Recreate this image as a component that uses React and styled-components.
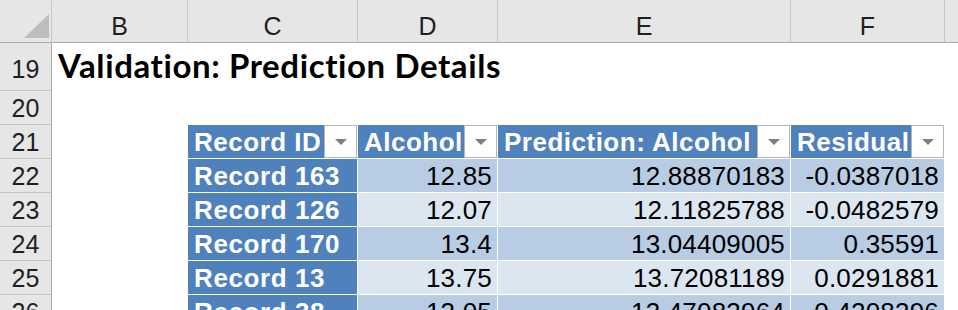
import React from "react";
import styled, { createGlobalStyle, css } from "styled-components";

const GlobalStyle = createGlobalStyle`
  html, body {
    margin: 0;
    padding: 0;
    background: #fff;
    overflow: hidden;
  }
`;

const COLUMNS = ["B", "C", "D", "E", "F", ""];

const HEADERS = ["Record ID", "Alcohol", "Prediction: Alcohol", "Residual"];

const ROWS = [
  ["Record 163", "12.85", "12.88870183", "-0.0387018"],
  ["Record 126", "12.07", "12.11825788", "-0.0482579"],
  ["Record 170", "13.4", "13.04409005", "0.35591"],
  ["Record 13", "13.75", "13.72081189", "0.0291881"],
  ["Record 38", "13.05", "13.47083964", "-0.4208396"],
];

const Sheet = styled.div`
  display: grid;
  grid-template-columns: 52px 136px 170px 140px 293px 154px 1fr;
  grid-template-rows: 43px 48px repeat(7, 34px);
  width: 958px;
  height: 310px;
  overflow: hidden;
  background: #fff;
  font-family: "Liberation Sans", Arial, sans-serif;
`;

const Corner = styled.div`
  position: relative;
  background: #e6e6e6;
  border-bottom: 1px solid #ababab;
  border-right: 1px solid #c8c8c8;

  &::after {
    content: "";
    position: absolute;
    left: 24px;
    top: 14px;
    width: 25px;
    height: 24px;
    background: #bdbdbd;
    clip-path: polygon(100% 0, 100% 100%, 0 100%);
  }
`;

const ColHead = styled.div`
  display: flex;
  align-items: flex-end;
  justify-content: center;
  padding-bottom: 3px;
  background: #e6e6e6;
  border-bottom: 1px solid #ababab;
  border-right: ${(p) => (p.$last ? "none" : "1px solid #c8c8c8")};
  font-size: 25px;
  line-height: 1;
  color: #1f1f1f;
`;

const RowHead = styled.div`
  display: flex;
  align-items: flex-end;
  justify-content: center;
  padding-bottom: ${(p) => (p.$tall ? "8px" : "3px")};
  background: #e6e6e6;
  border-right: 1px solid #ababab;
  border-bottom: 1px solid #c4c4c4;
  font-size: 25px;
  line-height: 1;
  color: #1f1f1f;
`;

const Blank = styled.div`
  grid-column: span ${(p) => p.$span || 1};
`;

const Title = styled.div`
  grid-column: 2 / -1;
  display: flex;
  align-items: flex-end;
  padding: 0 0 9px 6px;
  font-family: Lato, "Liberation Sans", sans-serif;
  font-weight: 700;
  font-size: 33px;
  letter-spacing: 0.6px;
  line-height: 1;
  color: #000;
  white-space: nowrap;
`;

const tableCell = css`
  display: flex;
  align-items: center;
  min-width: 0;
  white-space: nowrap;
  border-right: 1px solid #fff;
  border-bottom: 1px solid #fff;
  font-size: 26px;
  line-height: 1;
`;

const HeadCell = styled.div`
  ${tableCell};
  background: #4f81bd;
  color: #fff;
  font-weight: 700;
  letter-spacing: 0.5px;
`;

const HeadLabel = styled.span`
  flex: 1;
  padding-left: 6px;
`;

const FilterButton = styled.span`
  flex: none;
  display: flex;
  align-items: center;
  justify-content: center;
  width: 33px;
  height: 33px;
  box-sizing: border-box;
  background: #fff;
  border: 1px solid #b4b4b4;
`;

const IdCell = styled.div`
  ${tableCell};
  padding-left: 6px;
  background: #4f81bd;
  color: #fff;
  font-weight: 700;
  letter-spacing: 0.6px;
`;

const NumCell = styled.div`
  ${tableCell};
  justify-content: flex-end;
  padding-right: 5px;
  background: ${(p) => (p.$band ? "#b8cce4" : "#dce6f1")};
  color: #000;
  letter-spacing: 0.2px;
`;

const Caret = () => (
  <svg width="12" height="6" viewBox="0 0 12 6">
    <path d="M0 0h12L6 6z" fill="#7f7f7f" />
  </svg>
);

export default function App() {
  return (
    <>
      <GlobalStyle />
      <Sheet>
        <Corner />
        {COLUMNS.map((c, i) => (
          <ColHead key={`col-${i}`} $last={i === COLUMNS.length - 1}>
            {c}
          </ColHead>
        ))}

        <RowHead $tall>19</RowHead>
        <Title>Validation: Prediction Details</Title>

        <RowHead>20</RowHead>
        <Blank $span={6} />

        <RowHead>21</RowHead>
        <Blank />
        {HEADERS.map((h) => (
          <HeadCell key={h}>
            <HeadLabel>{h}</HeadLabel>
            <FilterButton>
              <Caret />
            </FilterButton>
          </HeadCell>
        ))}
        <Blank />

        {ROWS.map((r, i) => (
          <React.Fragment key={r[0]}>
            <RowHead>{22 + i}</RowHead>
            <Blank />
            <IdCell>{r[0]}</IdCell>
            <NumCell $band={i % 2 === 0}>{r[1]}</NumCell>
            <NumCell $band={i % 2 === 0}>{r[2]}</NumCell>
            <NumCell $band={i % 2 === 0}>{r[3]}</NumCell>
            <Blank />
          </React.Fragment>
        ))}
      </Sheet>
    </>
  );
}
